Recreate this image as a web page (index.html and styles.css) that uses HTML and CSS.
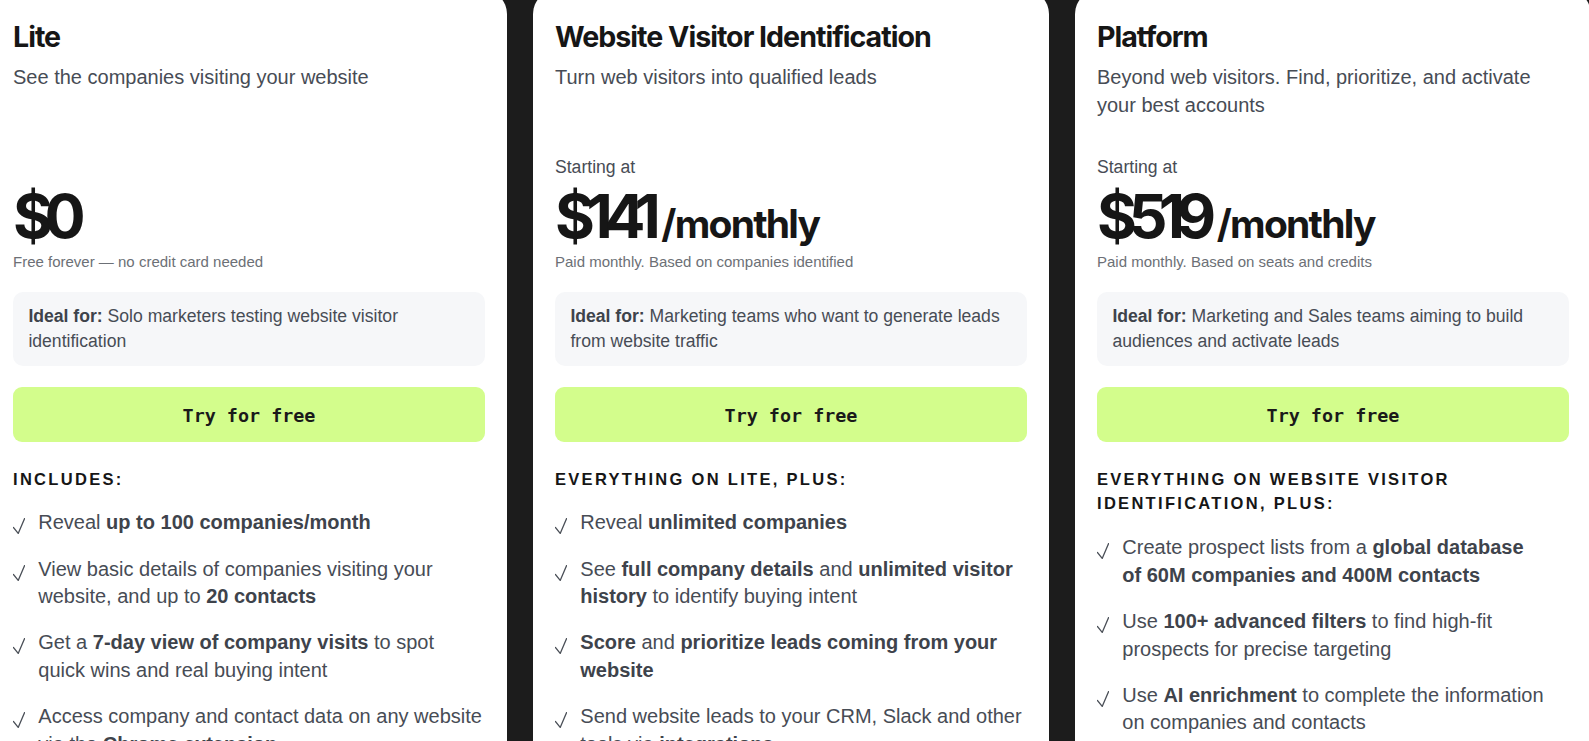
FILE: index.html
```html
<!DOCTYPE html>
<html lang="en">
<head>
<meta charset="utf-8">
<title>Pricing</title>
<link rel="stylesheet" href="styles.css">
</head>
<body>
<main class="plans">
  <section class="card">
    <h2 class="title">Lite</h2>
    <p class="subtitle">See the companies visiting your website</p>
    <p class="starting">&nbsp;</p>
    <div class="price"><span class="amount">$0</span></div>
    <p class="note">Free forever — no credit card needed</p>
    <div class="ideal"><b>Ideal for:</b> Solo marketers testing website visitor identification</div>
    <button class="cta">Try for free</button>
    <h3 class="includes">Includes:</h3>
    <ul class="features">
      <li><svg class="check" viewBox="0 0 12 16"><path d="M0.4 9.4 L5.2 15.4 L11.6 0.6"/></svg><span>Reveal <b>up to 100 companies/month</b></span></li>
      <li><svg class="check" viewBox="0 0 12 16"><path d="M0.4 9.4 L5.2 15.4 L11.6 0.6"/></svg><span>View basic details of companies visiting your website, and up to <b>20 contacts</b></span></li>
      <li><svg class="check" viewBox="0 0 12 16"><path d="M0.4 9.4 L5.2 15.4 L11.6 0.6"/></svg><span>Get a <b>7-day view of company visits</b> to spot quick wins and real buying intent</span></li>
      <li><svg class="check" viewBox="0 0 12 16"><path d="M0.4 9.4 L5.2 15.4 L11.6 0.6"/></svg><span>Access company and contact data on any website via the <b>Chrome extension</b></span></li>
    </ul>
  </section>

  <section class="card">
    <h2 class="title">Website Visitor Identification</h2>
    <p class="subtitle">Turn web visitors into qualified leads</p>
    <p class="starting">Starting at</p>
    <div class="price"><span class="amount">$141</span><span class="period">/monthly</span></div>
    <p class="note">Paid monthly. Based on companies identified</p>
    <div class="ideal"><b>Ideal for:</b> Marketing teams who want to generate leads from website traffic</div>
    <button class="cta">Try for free</button>
    <h3 class="includes">Everything on Lite, plus:</h3>
    <ul class="features">
      <li><svg class="check" viewBox="0 0 12 16"><path d="M0.4 9.4 L5.2 15.4 L11.6 0.6"/></svg><span>Reveal <b>unlimited companies</b></span></li>
      <li><svg class="check" viewBox="0 0 12 16"><path d="M0.4 9.4 L5.2 15.4 L11.6 0.6"/></svg><span>See <b>full company details</b> and <b>unlimited visitor history</b> to identify buying intent</span></li>
      <li><svg class="check" viewBox="0 0 12 16"><path d="M0.4 9.4 L5.2 15.4 L11.6 0.6"/></svg><span><b>Score</b> and <b>prioritize leads coming from your website</b></span></li>
      <li><svg class="check" viewBox="0 0 12 16"><path d="M0.4 9.4 L5.2 15.4 L11.6 0.6"/></svg><span>Send website leads to your CRM, Slack and other tools via <b>integrations</b></span></li>
    </ul>
  </section>

  <section class="card">
    <h2 class="title">Platform</h2>
    <p class="subtitle">Beyond web visitors. Find, prioritize, and activate your best accounts</p>
    <p class="starting">Starting at</p>
    <div class="price"><span class="amount">$519</span><span class="period">/monthly</span></div>
    <p class="note">Paid monthly. Based on seats and credits</p>
    <div class="ideal"><b>Ideal for:</b> Marketing and Sales teams aiming to build audiences and activate leads</div>
    <button class="cta">Try for free</button>
    <h3 class="includes">Everything on Website Visitor Identification, plus:</h3>
    <ul class="features">
      <li><svg class="check" viewBox="0 0 12 16"><path d="M0.4 9.4 L5.2 15.4 L11.6 0.6"/></svg><span>Create prospect lists from a <b>global database of&nbsp;60M companies and 400M contacts</b></span></li>
      <li><svg class="check" viewBox="0 0 12 16"><path d="M0.4 9.4 L5.2 15.4 L11.6 0.6"/></svg><span>Use <b>100+ advanced filters</b> to find high-fit prospects for precise targeting</span></li>
      <li><svg class="check" viewBox="0 0 12 16"><path d="M0.4 9.4 L5.2 15.4 L11.6 0.6"/></svg><span>Use <b>AI enrichment</b> to complete the information on companies and contacts</span></li>
      <li><svg class="check" viewBox="0 0 12 16"><path d="M0.4 9.4 L5.2 15.4 L11.6 0.6"/></svg><span>Activate your best accounts with <b>intent signals</b></span></li>
    </ul>
  </section>
</main>
</body>
</html>
```
FILE: styles.css
```css
* { box-sizing: border-box; }

html, body {
  margin: 0;
  padding: 0;
  height: 100%;
  overflow: hidden;
  background: #1c1c1c;
}

body {
  font-family: "Liberation Sans", Arial, sans-serif;
  color: #474c55;
}

.plans {
  display: flex;
  gap: 26px;
  margin-left: -9px;
  margin-top: -10px;
  align-items: flex-start;
}

.card {
  flex: 0 0 516px;
  width: 516px;
  min-height: 900px;
  background: #ffffff;
  border-radius: 24px;
  padding: 30px 22px;
}

.title {
  margin: 0;
  font-family: "Inter", "Liberation Sans", sans-serif;
  font-weight: 700;
  font-size: 28.6px;
  line-height: 34px;
  letter-spacing: -0.035em;
  color: #161616;
}

.subtitle {
  margin: 10px 0 0;
  font-size: 20px;
  line-height: 27.7px;
  min-height: 55.4px;
  color: #474c55;
}

.starting {
  margin: 35.5px 0 0;
  font-size: 17.6px;
  line-height: 24.6px;
  color: #474c55;
}

.price {
  margin-top: 3.2px;
  height: 66px;
  display: flex;
  align-items: baseline;
  font-family: "Inter", "Liberation Sans", sans-serif;
  font-weight: 700;
  color: #161616;
}

.amount {
  font-size: 61px;
  line-height: 66px;
  letter-spacing: -0.14em;
}

.period {
  margin-left: 9px;
  font-size: 39px;
  line-height: 66px;
  letter-spacing: -0.045em;
}

.note {
  margin: 3.5px 0 0;
  font-size: 15px;
  line-height: 20px;
  color: #6c7076;
}

.ideal {
  margin-top: 19.5px;
  padding: 12.3px 15.4px;
  background: #f6f7f9;
  border-radius: 10px;
  font-size: 17.6px;
  line-height: 24.6px;
  min-height: 74px;
  color: #474c55;
}

.ideal b { color: #3e434b; }

.cta {
  display: block;
  width: 100%;
  height: 55px;
  margin-top: 21px;
  border: 0;
  border-radius: 9px;
  background: #d3fd8c;
  font-family: "DejaVu Sans Mono", "Liberation Mono", monospace;
  font-weight: 700;
  font-size: 18.4px;
  padding-top: 3px;
  color: #1a1a1a;
  cursor: pointer;
}

.includes {
  margin: 25.2px 0 0;
  font-size: 16.5px;
  line-height: 24.6px;
  font-weight: 700;
  letter-spacing: 2.3px;
  text-transform: uppercase;
  color: #161616;
}

.features {
  list-style: none;
  margin: 18px 0 0;
  padding: 0;
  display: flex;
  flex-direction: column;
  gap: 18.4px;
}

.features li {
  display: flex;
  align-items: flex-start;
  gap: 13px;
  font-size: 20px;
  line-height: 27.7px;
  color: #474c55;
}

.features b { color: #3e434b; }

.check {
  flex: 0 0 12px;
  width: 12px;
  height: 16px;
  margin-top: 9px;
  margin-left: 0.3px;
  fill: none;
  stroke: #4a4f57;
  stroke-width: 1.3;
  stroke-linecap: round;
  stroke-linejoin: round;
}
```
